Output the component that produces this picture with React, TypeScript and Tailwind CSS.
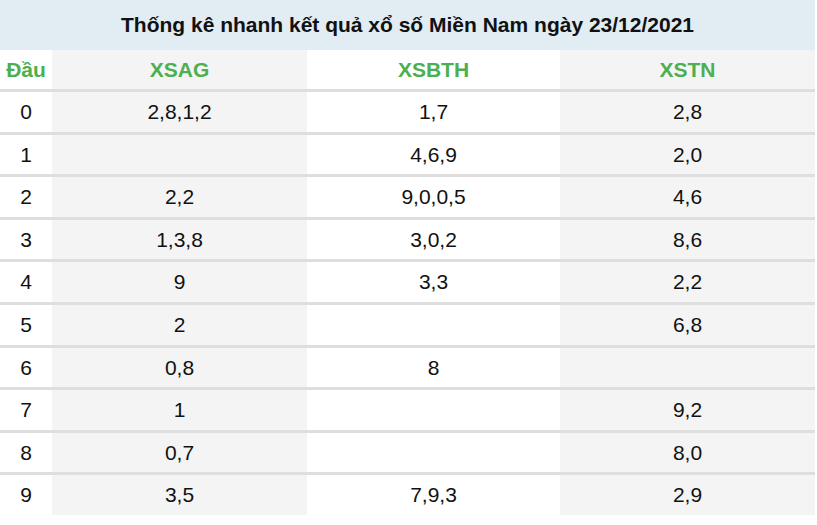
import React from "react";

const rows: [string, string, string, string][] = [
  ["0", "2,8,1,2", "1,7", "2,8"],
  ["1", "", "4,6,9", "2,0"],
  ["2", "2,2", "9,0,0,5", "4,6"],
  ["3", "1,3,8", "3,0,2", "8,6"],
  ["4", "9", "3,3", "2,2"],
  ["5", "2", "", "6,8"],
  ["6", "0,8", "8", ""],
  ["7", "1", "", "9,2"],
  ["8", "0,7", "", "8,0"],
  ["9", "3,5", "7,9,3", "2,9"],
];

export default function App() {
  return (
    <div
      className="w-[815px] bg-white text-[#111]"
      style={{ fontFamily: '"Liberation Sans", Arial, sans-serif' }}
    >
      <div className="h-[50px] bg-[#e1ecf3] flex items-center justify-center text-[21px] font-bold text-[#111]">
        Thống kê nhanh kết quả xổ số Miền Nam ngày 23/12/2021
      </div>
      <div className="flex h-[39px] text-[21px] font-bold text-[#4caf50]">
        <div className="w-[52px] bg-white flex items-center justify-center">Đầu</div>
        <div className="w-[255px] bg-[#f4f4f4] flex items-center justify-center">XSAG</div>
        <div className="w-[253px] bg-white flex items-center justify-center">XSBTH</div>
        <div className="w-[255px] bg-[#f4f4f4] flex items-center justify-center">XSTN</div>
      </div>
      {rows.map((r) => (
        <div key={r[0]} className="flex h-[42.6px] border-t-[3px] border-[#dedede] text-[21px]">
          <div className="w-[52px] bg-white flex items-center justify-center">{r[0]}</div>
          <div className="w-[255px] bg-[#f4f4f4] flex items-center justify-center">{r[1]}</div>
          <div className="w-[253px] bg-white flex items-center justify-center">{r[2]}</div>
          <div className="w-[255px] bg-[#f4f4f4] flex items-center justify-center">{r[3]}</div>
        </div>
      ))}
    </div>
  );
}
